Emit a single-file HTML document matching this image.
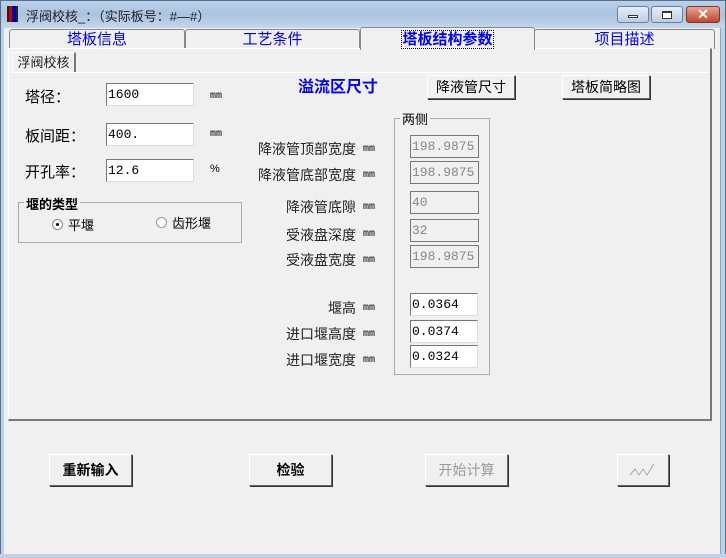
<!DOCTYPE html>
<html><head><meta charset="utf-8"><style>
*{box-sizing:border-box;margin:0;padding:0}
body{width:726px;height:558px;overflow:hidden;background:#f0f0f0;font-family:"Liberation Sans","Noto Sans CJK SC","WenQuanYi Zen Hei",sans-serif;font-size:14px;color:#000;position:relative}
.a{position:absolute;white-space:nowrap}
.title{left:0;top:0;width:726px;height:28px;background:linear-gradient(#b9d1ea,#aac3df 50%,#c4d7ec);border:1px solid #5a6f88;border-bottom:none}
.frameL{left:0;top:28px;width:4px;height:530px;background:#bcd2ea;border-left:1px solid #5a6f88}
.frameR{left:720px;top:28px;width:6px;height:530px;background:#bcd2ea;border-right:1px solid #5a6f88;border-left:1px solid #7ab}
.frameB{left:0;top:554px;width:726px;height:4px;background:#bcd2ea}
.tab{top:29px;height:20px;border:1px solid #888;border-bottom:none;border-radius:3px 3px 0 0;background:#f0f0f0;color:#0000ff;text-align:center;font-size:15px;line-height:19px}
.tb{border:1px solid #7a7a7a;border-top-color:#777;border-left-color:#777;background:#fff;font-family:"Liberation Mono","Noto Sans CJK SC",monospace;font-size:13px;line-height:21px;padding-left:1px;border-right-color:#ddd;border-bottom-color:#ddd;overflow:hidden}
.ro{background:#f0f0f0;color:#888;border:1px solid #777}
.btn{background:#f0f0f0;border:1px solid #fff;border-right-color:#666;border-bottom-color:#666;box-shadow:1px 1px 0 #333;text-align:center}
.lbl{text-align:right;width:160px;left:196px;font-size:14px;color:#222}
.mm{font-size:10px;left:363px;font-family:"Liberation Mono",monospace}
</style></head><body>
<div class="a title"></div>
<div class="a" style="left:7px;top:6px;width:11px;height:16px;background:linear-gradient(90deg,#222 0 2px,#c00 2px 5px,#00a 5px 9px,#222 9px)"></div>
<div class="a" style="left:26px;top:6px;font-size:13px;color:#222">浮阀校核_：（实际板号：#—#）</div>
<div class="a" style="left:617px;top:6px;width:32px;height:17px;border:1px solid #6d7f96;border-radius:3px;background:linear-gradient(#e6eef8,#bccde2)"><div style="margin:8px auto 0;width:10px;height:3px;border:1px solid #333;background:#fff"></div></div>
<div class="a" style="left:651px;top:6px;width:32px;height:17px;border:1px solid #6d7f96;border-radius:3px;background:linear-gradient(#e6eef8,#bccde2)"><div style="margin:4px auto 0;width:10px;height:8px;border:1px solid #333;border-top-width:2px;background:#fff"></div></div>
<div class="a" style="left:686px;top:6px;width:34px;height:17px;border:1px solid #7a3a2a;border-radius:3px;background:linear-gradient(#e8a393,#c4442a);color:#fff;font-weight:bold;text-align:center;font-size:14px;line-height:15px">✕</div>
<div class="a frameL"></div><div class="a frameR"></div><div class="a frameB"></div>

<div class="a tab" style="left:9px;width:176px">塔板信息</div>
<div class="a tab" style="left:185px;width:175px">工艺条件</div>
<div class="a tab" style="left:534px;width:181px">项目描述</div>
<div class="a" style="left:8px;top:48px;width:704px;height:373px;border:1px solid #fff;border-right:2px solid #777;border-bottom:2px solid #777"></div>
<div class="a tab" style="left:360px;top:27px;width:175px;height:23px;border-bottom:none;background:#f0f0f0;font-weight:bold;line-height:24px"><span style="outline:1px dotted #000">塔板结构参数</span></div>
<div class="a" style="left:12px;top:52px;width:64px;height:20px;border:1px solid #fff;border-right:2px solid #777;border-bottom:none;font-size:13px;line-height:19px;text-align:center;color:#222">浮阀校核</div>
<div class="a" style="left:10px;top:72px;width:700px;height:1px;background:#fff"></div>

<div class="a" style="left:25px;top:86px;font-size:15px">塔径：</div>
<div class="a tb" style="left:106px;top:83px;width:88px;height:23px">1600</div>
<div class="a mm" style="left:210px;top:91px">mm</div>
<div class="a" style="left:25px;top:125px;font-size:15px">板间距：</div>
<div class="a tb" style="left:106px;top:123px;width:88px;height:23px">400.</div>
<div class="a mm" style="left:210px;top:129px">mm</div>
<div class="a" style="left:25px;top:161px;font-size:15px">开孔率：</div>
<div class="a tb" style="left:106px;top:159px;width:88px;height:23px">12.6</div>
<div class="a" style="left:210px;top:163px;font-size:11px">%</div>

<div class="a" style="left:18px;top:202px;width:224px;height:41px;border:1px solid #aaa"></div>
<div class="a" style="left:24px;top:194px;padding:0 2px;background:#f0f0f0;font-weight:bold;font-size:13px">堰的类型</div>
<div class="a" style="left:52px;top:219px;width:11px;height:11px;border:1px solid #888;border-radius:50%;background:#fff"><div style="margin:3px;width:3px;height:3px;background:#000;border-radius:50%"></div></div>
<div class="a" style="left:68px;top:215px;font-size:13px">平堰</div>
<div class="a" style="left:156px;top:217px;width:11px;height:11px;border:1px solid #999;border-radius:50%;background:#fff"></div>
<div class="a" style="left:172px;top:213px;font-size:13px">齿形堰</div>

<div class="a" style="left:298px;top:73px;color:#0000ff;font-weight:bold;font-size:16px">溢流区尺寸</div>
<div class="a btn" style="left:427px;top:75px;width:88px;height:24px;line-height:23px">降液管尺寸</div>
<div class="a btn" style="left:562px;top:75px;width:88px;height:24px;line-height:23px">塔板简略图</div>

<div class="a" style="left:394px;top:118px;width:96px;height:257px;border:1px solid #aaa"></div>
<div class="a" style="left:400px;top:109px;padding:0 2px;background:#f0f0f0;font-size:13px">两侧</div>

<div class="a lbl" style="top:139px">降液管顶部宽度</div><div class="a mm" style="top:144px">mm</div>
<div class="a lbl" style="top:165px">降液管底部宽度</div><div class="a mm" style="top:170px">mm</div>
<div class="a lbl" style="top:197px">降液管底隙</div><div class="a mm" style="top:202px">mm</div>
<div class="a lbl" style="top:225px">受液盘深度</div><div class="a mm" style="top:229px">mm</div>
<div class="a lbl" style="top:250px">受液盘宽度</div><div class="a mm" style="top:255px">mm</div>
<div class="a lbl" style="top:298px">堰高</div><div class="a mm" style="top:303px">mm</div>
<div class="a lbl" style="top:324px">进口堰高度</div><div class="a mm" style="top:329px">mm</div>
<div class="a lbl" style="top:350px">进口堰宽度</div><div class="a mm" style="top:355px">mm</div>

<div class="a tb ro" style="left:410px;top:135px;width:69px;height:23px">198.9875</div>
<div class="a tb ro" style="left:410px;top:161px;width:69px;height:23px">198.9875</div>
<div class="a tb ro" style="left:410px;top:191px;width:69px;height:23px">40</div>
<div class="a tb ro" style="left:410px;top:219px;width:69px;height:23px">32</div>
<div class="a tb ro" style="left:410px;top:245px;width:69px;height:23px">198.9875</div>
<div class="a tb" style="left:410px;top:293px;width:68px;height:23px">0.0364</div>
<div class="a tb" style="left:410px;top:320px;width:68px;height:23px">0.0374</div>
<div class="a tb" style="left:410px;top:345px;width:68px;height:23px">0.0324</div>

<div class="a btn" style="left:49px;top:454px;width:83px;height:32px;line-height:31px;font-weight:bold">重新输入</div>
<div class="a btn" style="left:249px;top:454px;width:83px;height:32px;line-height:31px;font-weight:bold">检验</div>
<div class="a btn" style="left:425px;top:454px;width:83px;height:32px;line-height:31px;color:#999">开始计算</div>
<div class="a btn" style="left:617px;top:454px;width:52px;height:32px"><svg width="50" height="30" viewBox="0 0 50 30"><path d="M12 20 L17 14 L21 20 L25 14 L29 20 L36 9" stroke="#aaa" fill="none"/></svg></div>
</body></html>
